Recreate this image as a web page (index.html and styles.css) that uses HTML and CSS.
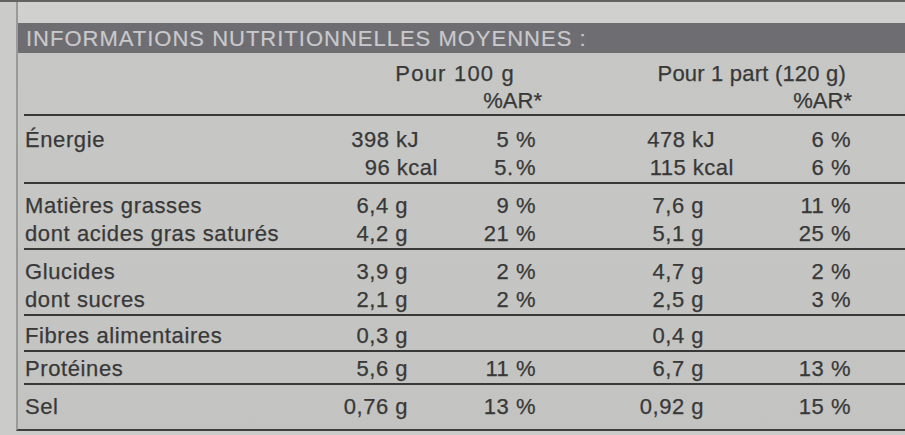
FILE: index.html
```html
<!DOCTYPE html>
<html lang="fr">
<head>
<meta charset="utf-8">
<title>Informations nutritionnelles</title>
<link rel="stylesheet" href="styles.css">
</head>
<body>
<div class="top-rule"></div>
<div class="panel">
  <h1 class="bar">INFORMATIONS NUTRITIONNELLES MOYENNES :</h1>
  <div class="table">
    <div class="sec head">
      <div class="hd hd-a">Pour 100 g</div>
      <div class="hd hd-b">Pour 1 part (120 g)</div>
      <div class="ar ar-a">%AR*</div>
      <div class="ar ar-b">%AR*</div>
    </div>

    <div class="sec s-energy">
      <div class="lbl">Énergie</div>
      <div class="v kj">398 kJ</div>
      <div class="v">5 %</div>
      <div class="v kj">478 kJ</div>
      <div class="v">6 %</div>
      <div></div>
      <div></div>
      <div class="v kcal">96 kcal</div>
      <div class="v">5.&#8202;%</div>
      <div class="v kcal">115 kcal</div>
      <div class="v">6 %</div>
    </div>

    <div class="sec s-fat">
      <div class="lbl">Matières grasses</div>
      <div class="v">6,4 g</div>
      <div class="v">9 %</div>
      <div class="v">7,6 g</div>
      <div class="v">11 %</div>
      <div></div>
      <div class="lbl">dont acides gras saturés</div>
      <div class="v">4,2 g</div>
      <div class="v">21 %</div>
      <div class="v">5,1 g</div>
      <div class="v">25 %</div>
    </div>

    <div class="sec s-carb">
      <div class="lbl">Glucides</div>
      <div class="v">3,9 g</div>
      <div class="v">2 %</div>
      <div class="v">4,7 g</div>
      <div class="v">2 %</div>
      <div></div>
      <div class="lbl">dont sucres</div>
      <div class="v">2,1 g</div>
      <div class="v">2 %</div>
      <div class="v">2,5 g</div>
      <div class="v">3 %</div>
    </div>

    <div class="sec s-fib">
      <div class="lbl">Fibres alimentaires</div>
      <div class="v">0,3 g</div>
      <div class="v"></div>
      <div class="v">0,4 g</div>
      <div class="v"></div>
    </div>

    <div class="sec s-prot">
      <div class="lbl">Protéines</div>
      <div class="v">5,6 g</div>
      <div class="v">11 %</div>
      <div class="v">6,7 g</div>
      <div class="v">13 %</div>
    </div>

    <div class="sec s-salt">
      <div class="lbl">Sel</div>
      <div class="v">0,76 g</div>
      <div class="v">13 %</div>
      <div class="v">0,92 g</div>
      <div class="v">15 %</div>
    </div>
  </div>
</div>
</body>
</html>
```

FILE: styles.css
```css
html, body {
  margin: 0;
  padding: 0;
}
body {
  width: 905px;
  height: 435px;
  overflow: hidden;
  background: #cbcbc9;
  font-family: "Liberation Sans", Arial, sans-serif;
  color: #383838;
  -webkit-text-stroke: 0.25px currentColor;
}
.top-rule {
  height: 2px;
  background: #626262;
}
.panel {
  margin-left: 16px;
  border-left: 2px solid #9a9a98;
  border-bottom: 2px solid #3e3e3e;
  padding-top: 21px;
  background: linear-gradient(180deg, #d0d0ce 0px, #d0d0ce 21px, #c7c7c5 21px, #c3c3c1 100%);
}
.bar {
  margin: 0;
  height: 30px;
  box-sizing: border-box;
  padding: 2px 0 0 8px;
  line-height: 28px;
  font-size: 22px;
  font-weight: normal;
  letter-spacing: 1px;
  white-space: nowrap;
  color: #c9c9cc;
  -webkit-text-stroke: 0.2px #c9c9cc;
  background: #6e6d72;
}
.table {
  padding-left: 6px;
}
.sec {
  display: grid;
  grid-template-columns: 276px 107px 128px 168px 147px 1fr;
  font-size: 22px;
  letter-spacing: 0.6px;
  line-height: 28px;
  border-bottom: 2px solid #383838;
  white-space: nowrap;
}
.lbl {
  padding-left: 1px;
}
.v {
  text-align: right;
  letter-spacing: 0.5px;
  margin-right: -1px;
}
.kj {
  margin-right: -12px;
}
.kcal {
  margin-right: -31px;
}

.head {
  padding-top: 6px;
  font-size: 22px;
}
.hd {
  line-height: 29px;
  text-align: right;
}
.hd-a {
  grid-column: 2 / 4;
  padding-right: 20px;
  letter-spacing: 1.2px;
}
.hd-b {
  grid-column: 4 / 6;
  padding-right: 4px;
  letter-spacing: 0.2px;
}
.ar {
  line-height: 26px;
  text-align: right;
  letter-spacing: 0;
}
.ar-a {
  grid-column: 3;
  margin-right: -7px;
}
.ar-b {
  grid-column: 5;
  margin-right: -2px;
}

.s-energy { padding-top: 10px; }
.s-fat { padding-top: 8px; }
.s-carb { padding-top: 8px; }
.s-fib { padding-top: 6px; }
.s-prot { padding-top: 3px; }
.s-salt {
  padding-top: 8px;
  padding-bottom: 8px;
  border-bottom: none;
}
```
